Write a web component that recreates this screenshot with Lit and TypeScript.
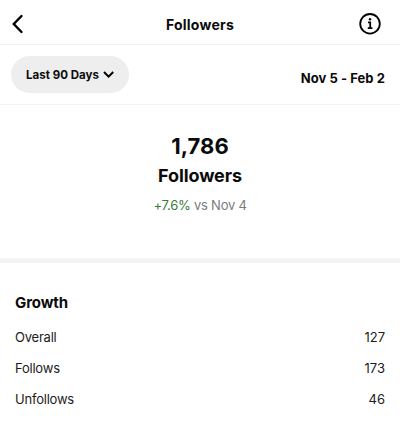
import { LitElement, html, css } from "lit";

class AppRoot extends LitElement {
  static styles = css`
    :host { display: flex; flex-direction: column; box-sizing: border-box; height: 429px; background: #fff; color: #0b0b0b; font-family: Inter, sans-serif; overflow: hidden; }
    .header { display: grid; grid-template-columns: 40px 1fr 40px; align-items: center; height: 44px; box-sizing: content-box; border-bottom: 1px solid #f3f3f3; }
    .header svg { display: block; }
    .title { text-align: center; font-size: 14px; font-weight: 700; letter-spacing: 0.25px; padding-top: 5px; }
    .back { padding: 4px 0 0 10px; }
    .info { padding-top: 4px; margin-left: -1.7px; }
    .filter { display: flex; align-items: center; justify-content: space-between; height: 59px; padding: 0 15px 0 11px; border-bottom: 1px solid #f3f3f3; font-weight: 700; }
    .pill { display: flex; align-items: center; gap: 4px; height: 37px; width: 118px; box-sizing: border-box; padding: 1px 0 0 15px; margin-bottom: 1px; border-radius: 19px; background: #eeeeee; font-size: 11.5px; letter-spacing: 0.03px; white-space: nowrap; }
    .range { font-size: 13px; letter-spacing: 0.06px; padding-top: 7px; }
    .summary { display: flex; flex-direction: column; align-items: center; height: 127px; padding-top: 26px; border-bottom: 5px solid #f4f4f4; }
    .count { font-size: 22px; font-weight: 700; line-height: 30px; }
    .label { font-size: 18px; font-weight: 700; letter-spacing: -0.1px; line-height: 28px; margin-top: 1px; }
    .delta { font-size: 13px; letter-spacing: -0.23px; line-height: 18px; margin-top: 6px; color: #7c7c7c; }
    .up { color: #387c3c; }
    .growth { padding: 29px 15px 0; }
    .heading { font-size: 15px; font-weight: 700; letter-spacing: -0.12px; line-height: 22px; margin-bottom: 8px; }
    .row { display: flex; justify-content: space-between; align-items: center; height: 30.7px; font-size: 13px; color: #1c1c1c; }
    .name { letter-spacing: -0.22px; }
  `;
  rows = [["Overall", "127"], ["Follows", "173"], ["Unfollows", "46"]];
  render() {
    return html`
      <div class="header">
        <div class="back"><svg width="16" height="20" viewBox="0 0 16 20" fill="none" stroke="#000" stroke-width="2.4" stroke-linecap="round"><path d="M11.5 2 3.8 10l7.7 8"/></svg></div>
        <div class="title">Followers</div>
        <div class="info"><svg width="24" height="24" viewBox="0 0 24 24" fill="none" stroke="#000" stroke-width="1.8"><circle cx="12" cy="11.8" r="9.8"/><path d="M10 10.3h2.2V16M9.8 16.2h4.6"/><circle cx="12" cy="7.3" r="1.2" fill="#000" stroke="none"/></svg></div>
      </div>
      <div class="filter">
        <div class="pill"><span>Last 90 Days</span><svg width="12" height="10" viewBox="0 0 12 10" fill="none" stroke="#000" stroke-width="2"><path d="m1 2 4.6 4.6L10.2 2"/></svg></div>
        <div class="range">Nov 5 - Feb 2</div>
      </div>
      <div class="summary">
        <div class="count">1,786</div>
        <div class="label">Followers</div>
        <div class="delta"><span class="up">+7.6%</span> vs Nov 4</div>
      </div>
      <div class="growth">
        <div class="heading">Growth</div>
        ${this.rows.map(([name, value]) => html`<div class="row"><span class="name">${name}</span><span>${value}</span></div>`)}
      </div>`;
  }
}
customElements.define("app-root", AppRoot);
